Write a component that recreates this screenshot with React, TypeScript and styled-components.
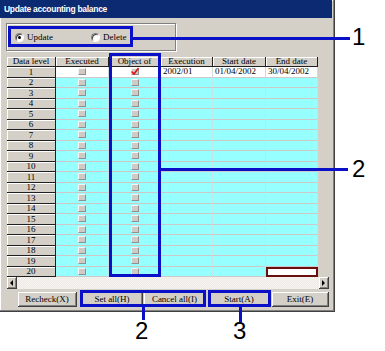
import styled, {createGlobalStyle} from "styled-components";

const GlobalStyle = createGlobalStyle`
  html, body {
    margin: 0;
    padding: 0;
    background: #ffffff;
  }
`

const BLUE = "#0a10c8";

const Page = styled.div`
  position: relative;
  width: 385px;
  height: 351px;
  overflow: hidden;
  background: #ffffff;
  font-family: "Liberation Serif", serif;
`

const Window = styled.div`
  width: 335px;
  height: 312px;
  box-sizing: border-box;
  background: #d4d0c8;
  border-right: 1px solid #404040;
  border-bottom: 1px solid #404040;
  box-shadow: inset -1px -1px 0 #808080, inset 1px 1px 0 #ffffff;
  display: flex;
  flex-direction: column;
`

const TitleBar = styled.div`
  height: 18px;
  margin-right: 2px;
  padding-left: 4px;
  background: #0b2a72;
  color: #ffffff;
  font: bold 8.5px "Liberation Sans", sans-serif;
  letter-spacing: -0.3px;
  display: flex;
  align-items: center;
`

const GroupBox = styled.div`
  margin: 5px 0 0 6px;
  width: 170px;
  height: 28px;
  box-sizing: border-box;
  border: 1px solid #808080;
  box-shadow: 1px 1px 0 #ffffff, inset 1px 1px 0 #ffffff;
  display: flex;
  align-items: center;
  padding-left: 8px;
  gap: 38px;
`

const RadioLabel = styled.label`
  display: flex;
  align-items: center;
  gap: 3px;
  font-size: 9px;
  color: #000;
`

const RadioDot = styled.span<{ $on?: boolean }>`
  width: 9px;
  height: 9px;
  box-sizing: border-box;
  border-radius: 50%;
  background: #ffffff;
  border: 1px solid #808080;
  border-right-color: #ffffff;
  border-bottom-color: #ffffff;
  box-shadow: inset 1px 1px 0 #404040;
  display: flex;
  align-items: center;
  justify-content: center;

  &::after {
    content: "";
    width: 3px;
    height: 3px;
    border-radius: 50%;
    background: ${p => p.$on ? "#000" : "transparent"};
  }
`

const GridArea = styled.div`
  margin: 6px 0 0 7px;
  width: 322px;
  display: flex;
  flex-direction: column;
`

const Table = styled.div`
  display: grid;
  grid-template-columns: 49px 53px 52px 52px 53px 52px;
  grid-template-rows: 10px repeat(20, 10.5px);
  width: 311px;
  font-size: 9px;
  line-height: 1;
`

const HeadCell = styled.div`
  box-sizing: border-box;
  background: #d4d0c8;
  border-right: 1px solid #202020;
  border-bottom: 1px solid #202020;
  box-shadow: inset 1px 1px 0 #ffffff;
  display: flex;
  align-items: flex-end;
  justify-content: center;
  white-space: nowrap;
  overflow: hidden;
`

const DataCell = styled.div<{ $white?: boolean; $focus?: boolean }>`
  box-sizing: border-box;
  background: ${p => p.$white || p.$focus ? "#ffffff" : "#96ffff"};
  border-right: 1px solid ${p => p.$white ? "#d8d8d8" : "#c4e4e4"};
  border-bottom: 1px solid #cfc8c8;
  outline: ${p => p.$focus ? "2px solid #6a0e0e" : "none"};
  outline-offset: -2px;
  display: flex;
  align-items: center;
  padding-left: 2px;
  white-space: nowrap;
  overflow: hidden;
`

const CheckCell = styled(DataCell)`
  justify-content: center;
  padding-left: 0;
  position: relative;
`

const CheckBox = styled.span`
  width: 8px;
  height: 7px;
  box-sizing: border-box;
  background: #cfcbc4;
  border: 1px solid #f4f4f4;
  border-right-color: #909090;
  border-bottom-color: #909090;
`

const Tick = styled.svg`
  position: absolute;
  left: 21px;
  top: -1px;
`

const ScrollBar = styled.div`
  height: 12px;
  display: flex;
  background: repeating-conic-gradient(#ece9e4 0 25%, #f8f6f2 0 50%) 0 0 / 2px 2px;
`

const ScrollButton = styled.div`
  width: 10px;
  height: 12px;
  box-sizing: border-box;
  background: #d4d0c8;
  border-right: 1px solid #404040;
  border-bottom: 1px solid #404040;
  box-shadow: inset 1px 1px 0 #ffffff, inset -1px -1px 0 #808080;
  display: flex;
  align-items: center;
  justify-content: center;
`

const ScrollTrack = styled.div`
  flex: 1;
`

const Arrow = styled.span<{ $dir: "left" | "right" }>`
  width: 0;
  height: 0;
  border-top: 3px solid transparent;
  border-bottom: 3px solid transparent;
  ${p => p.$dir === "left" ? "border-right: 3px solid #000;" : "border-left: 3px solid #000;"}
`

const ButtonRow = styled.div`
  display: flex;
  margin-top: 3px;
  padding-left: 18px;
`

const WinButton = styled.button<{ $w: number; $gap: number }>`
  width: ${p => p.$w}px;
  height: 15px;
  margin: 0 0 0 ${p => p.$gap}px;
  padding: 0;
  box-sizing: border-box;
  background: #d4d0c8;
  border: none;
  border-right: 1px solid #404040;
  border-bottom: 1px solid #404040;
  box-shadow: inset 1px 1px 0 #ffffff, inset -1px -1px 0 #808080;
  font: 9px "Liberation Serif", serif;
  color: #000;
  appearance: none;
`

const Frame = styled.div<{ $x: number; $y: number; $w: number; $h: number }>`
  position: absolute;
  left: ${p => p.$x}px;
  top: ${p => p.$y}px;
  width: ${p => p.$w}px;
  height: ${p => p.$h}px;
  box-sizing: border-box;
  border: 3px solid ${BLUE};
`

const Leader = styled.div<{ $x: number; $y: number; $w: number; $h: number }>`
  position: absolute;
  left: ${p => p.$x}px;
  top: ${p => p.$y}px;
  width: ${p => p.$w}px;
  height: ${p => p.$h}px;
  background: ${BLUE};
`

const Callout = styled.div<{ $x: number; $y: number }>`
  position: absolute;
  left: ${p => p.$x}px;
  top: ${p => p.$y}px;
  font: 24px/24px "Liberation Sans", Arial, sans-serif;
  color: #000;
`

const rows = Array.from({length: 20}, (_, i) => i + 1);

const buttons = [
    {label: "Recheck(X)", w: 59, gap: 0},
    {label: "Set all(H)", w: 61, gap: 5},
    {label: "Cancel all(I)", w: 62, gap: 1},
    {label: "Start(A)", w: 63, gap: 2},
    {label: "Exit(E)", w: 57, gap: 1},
];

const App = () => {
    return (
        <Page>
            <GlobalStyle/>
            <Window>
                <TitleBar>Update accounting balance</TitleBar>
                <GroupBox>
                    <RadioLabel><RadioDot $on/>Update</RadioLabel>
                    <RadioLabel><RadioDot/>Delete</RadioLabel>
                </GroupBox>
                <GridArea>
                    <Table>
                        <HeadCell>Data level</HeadCell>
                        <HeadCell>Executed</HeadCell>
                        <HeadCell>Object of</HeadCell>
                        <HeadCell>Execution</HeadCell>
                        <HeadCell>Start date</HeadCell>
                        <HeadCell>End date</HeadCell>
                        {rows.map(n => {
                            const first = n === 1;
                            return [
                                <HeadCell key={`l${n}`}>{n}</HeadCell>,
                                <CheckCell key={`e${n}`} $white={first}><CheckBox/></CheckCell>,
                                <CheckCell key={`o${n}`} $white={first}>
                                    <CheckBox/>
                                    {first && (
                                        <Tick width="10" height="10" viewBox="0 0 10 10">
                                            <path d="M1.5 5.5 L4 8 L8.5 2" stroke="#e01010" strokeWidth="1.6"
                                                  fill="none"/>
                                        </Tick>
                                    )}
                                </CheckCell>,
                                <DataCell key={`x${n}`} $white={first}>{first ? "2002/01" : null}</DataCell>,
                                <DataCell key={`s${n}`} $white={first}>{first ? "01/04/2002" : null}</DataCell>,
                                <DataCell key={`d${n}`} $white={first}
                                          $focus={n === 20}>{first ? "30/04/2002" : null}</DataCell>,
                            ];
                        })}
                    </Table>
                    <ScrollBar>
                        <ScrollButton><Arrow $dir="left"/></ScrollButton>
                        <ScrollTrack/>
                        <ScrollButton><Arrow $dir="right"/></ScrollButton>
                    </ScrollBar>
                </GridArea>
                <ButtonRow>
                    {buttons.map(b => (
                        <WinButton key={b.label} $w={b.w} $gap={b.gap}>{b.label}</WinButton>
                    ))}
                </ButtonRow>
            </Window>

            <Frame $x={8} $y={26} $w={125} $h={21}/>
            <Leader $x={132} $y={37} $w={218} $h={3}/>
            <Callout $x={352} $y={25}>1</Callout>

            <Frame $x={109} $y={53} $w={52} $h={224}/>
            <Leader $x={160} $y={168} $w={188} $h={3}/>
            <Callout $x={352} $y={157}>2</Callout>

            <Frame $x={80} $y={290} $w={126} $h={17}/>
            <Leader $x={142} $y={306} $w={3} $h={14}/>
            <Callout $x={135} $y={319}>2</Callout>

            <Frame $x={208} $y={290} $w={63} $h={17}/>
            <Leader $x={239} $y={306} $w={3} $h={16}/>
            <Callout $x={233} $y={319}>3</Callout>
        </Page>
    )
}

export default App;
